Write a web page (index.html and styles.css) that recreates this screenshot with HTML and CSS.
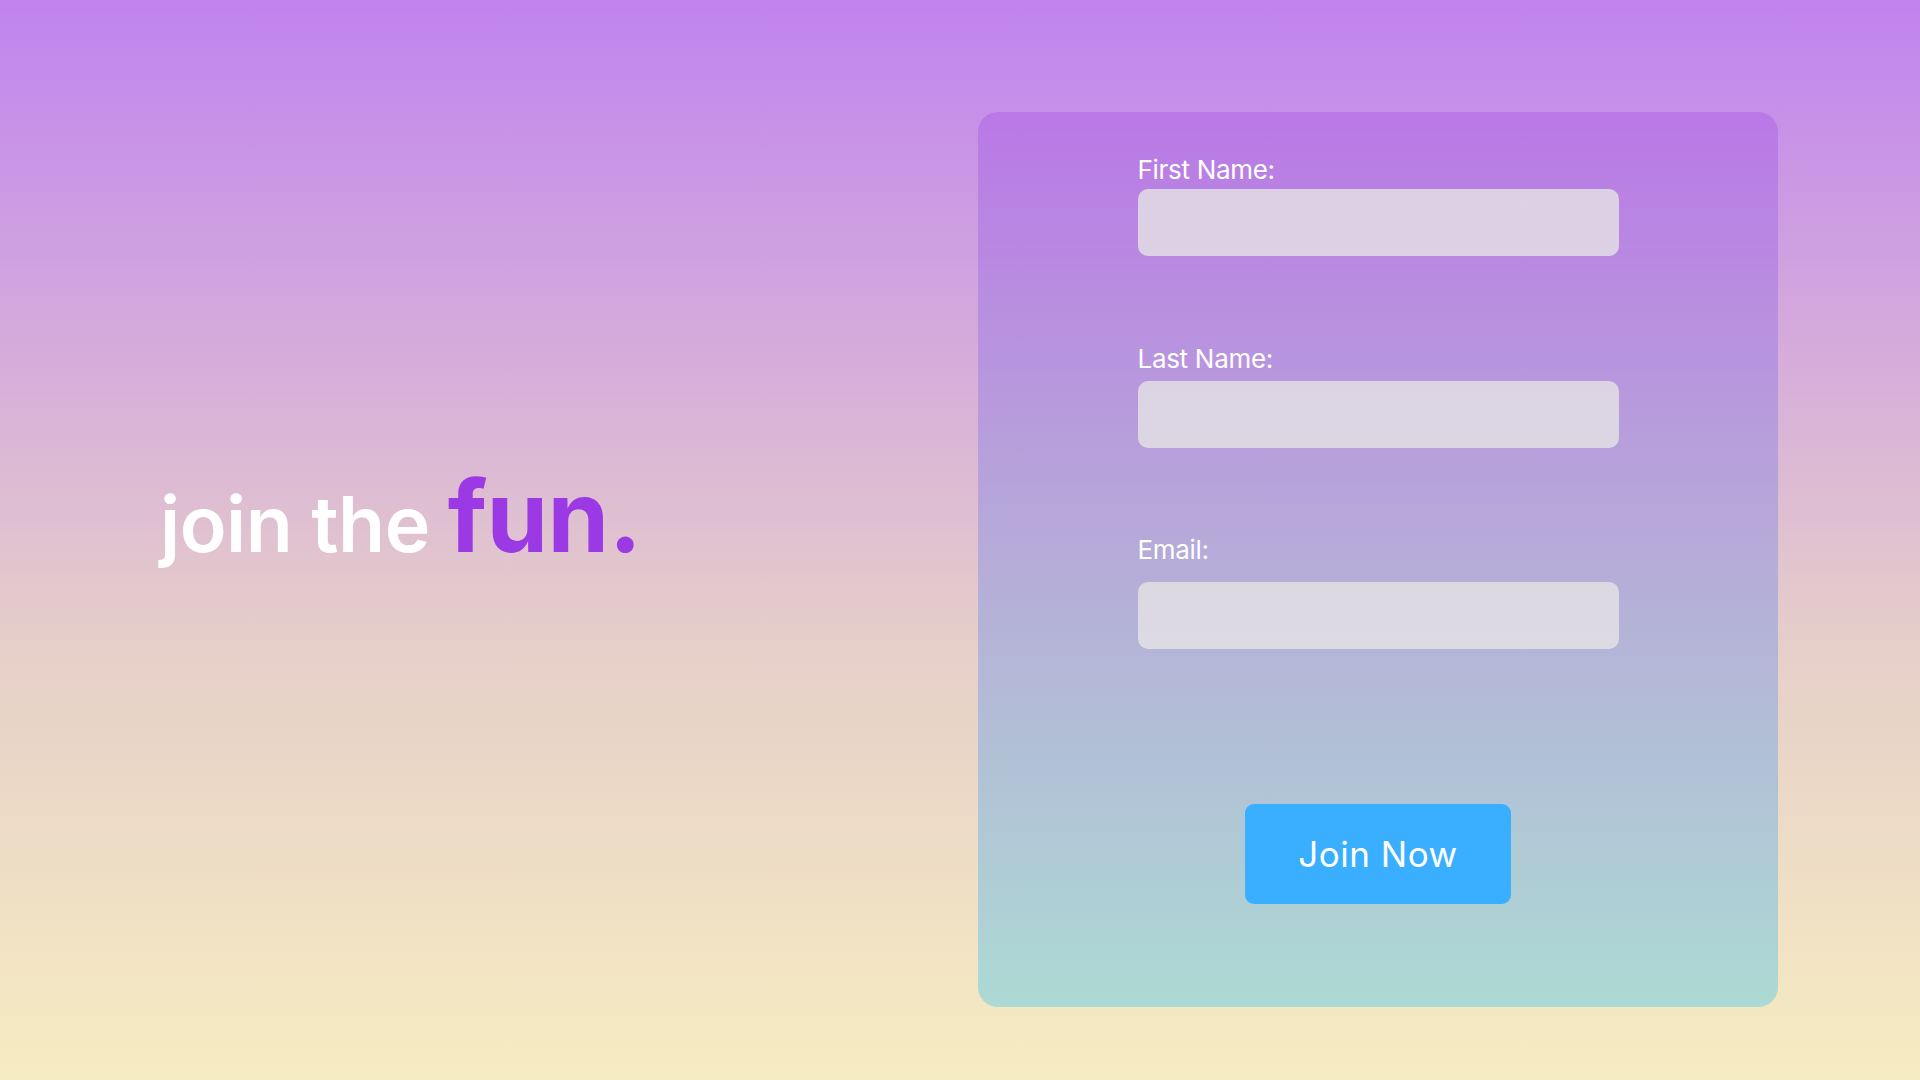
FILE: index.html
```html
<!DOCTYPE html>
<html lang="en">
<head>
<meta charset="utf-8">
<title>Join the fun</title>
<link rel="stylesheet" href="styles.css">
</head>
<body>
<main class="page">
  <section class="hero">
    <h1 class="headline"><span class="headline-light">join the</span> <span class="headline-accent">fun.</span></h1>
  </section>
  <section class="card">
    <form class="signup">
      <div class="field field-first">
        <label class="field-label" for="first">First Name:</label>
        <input class="field-input" id="first" type="text">
      </div>
      <div class="field field-last">
        <label class="field-label" for="last">Last Name:</label>
        <input class="field-input" id="last" type="text">
      </div>
      <div class="field field-email">
        <label class="field-label" for="email">Email:</label>
        <input class="field-input" id="email" type="email">
      </div>
      <div class="actions">
        <button class="join-btn" type="button">Join Now</button>
      </div>
    </form>
  </section>
</main>
</body>
</html>
```

FILE: styles.css
```css
html, body {
  margin: 0;
  padding: 0;
}

body {
  width: 1920px;
  height: 1080px;
  overflow: hidden;
  font-family: Inter, "Open Sans", sans-serif;
  background: linear-gradient(to bottom, #c083ef 0%, #d7afd9 35%, #e6cfc9 60%, #f6ecc1 100%);
}

.page {
  display: flex;
  height: 1080px;
  box-sizing: border-box;
  padding: 112px 142px 73px 0;
}

.hero {
  width: 978px;
  flex: none;
  box-sizing: border-box;
  padding-left: 160px;
  padding-top: 355px;
}

.headline {
  margin: 0;
  font-weight: 600;
  line-height: 1;
  white-space: nowrap;
}

.headline-light {
  color: #ffffff;
  font-size: 77px;
  letter-spacing: -0.5px;
}

.headline-accent {
  margin-left: 10px;
  color: #9b3ae4;
  font-size: 99px;
  font-weight: 700;
  letter-spacing: -0.6px;
}

.card {
  width: 800px;
  height: 895px;
  flex: none;
  border-radius: 20px;
  background: linear-gradient(to bottom, #ba78e6 0%, #b6acd8 50%, #acdad4 100%);
  display: flex;
  justify-content: center;
}

.signup {
  width: 481px;
  display: flex;
  flex-direction: column;
  padding-top: 40px;
}

.field {
  display: flex;
  flex-direction: column;
}

.field-label {
  color: #ffffff;
  font-size: 26px;
  line-height: 36px;
  font-weight: 400;
  letter-spacing: -0.3px;
}

.field-input {
  height: 67px;
  border: none;
  border-radius: 10px;
  background: rgba(228, 226, 228, 0.82);
  margin: 0;
  padding: 0 16px;
  box-sizing: border-box;
  font: inherit;
}

.field-first .field-label { margin-bottom: 1px; }
.field-last { margin-top: 85px; }
.field-last .field-label { margin-bottom: 4px; }
.field-email { margin-top: 84px; }
.field-email .field-label { margin-bottom: 14px; }

.actions {
  display: flex;
  justify-content: center;
  margin-top: 155px;
}

.join-btn {
  width: 266px;
  height: 100px;
  border: none;
  border-radius: 9px;
  background: #3aafff;
  color: #ffffff;
  font-family: inherit;
  font-size: 35px;
  font-weight: 400;
  letter-spacing: 0.5px;
  cursor: pointer;
}
```
